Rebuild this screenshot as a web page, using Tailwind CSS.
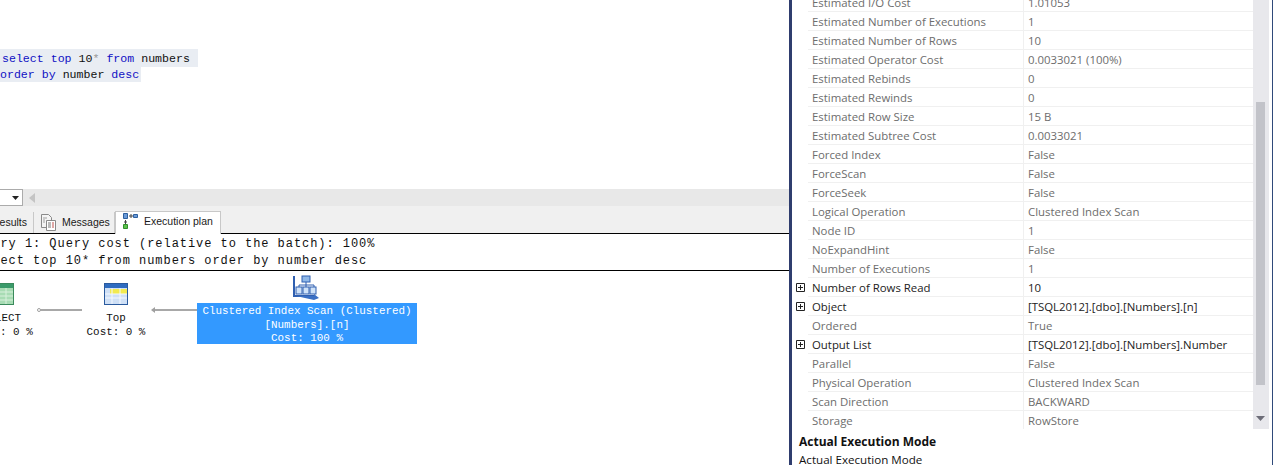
<!DOCTYPE html>
<html lang="en">
<head>
    <meta charset="UTF-8">
    <title>Execution plan</title>
    <script src="https://cdn.jsdelivr.net/npm/@tailwindcss/browser@4"></script>
</head>
<body class="bg-white overflow-hidden">
<div class="flex w-[1273px] h-[465px] overflow-hidden font-['Open_Sans',sans-serif] text-[11.4px]">

    <!-- Left: editor and results -->
    <div class="w-[789px] h-full flex flex-col shrink-0 overflow-hidden">
        <!-- Query editor -->
        <div class="h-[189px] pt-[49px] font-['Liberation_Mono',monospace] text-[11.6px] text-[#101010]">
            <div class="w-[198px] h-[18px] pl-[2px] leading-[19px] bg-[#e9edf3] whitespace-pre"><span class="text-[#1010c4]">select top</span> 10<span class="text-[#999]">*</span> <span class="text-[#1010c4]">from</span> numbers</div>
            <div class="w-[141px] h-[15px] leading-[15px] bg-[#e9edf3] whitespace-pre"><span class="text-[#1010c4]">order by</span> number <span class="text-[#1010c4]">desc</span></div>
        </div>

        <!-- Scroll bar strip -->
        <div class="h-[17px] bg-[#e8e8e8] flex items-center">
            <div class="w-[23px] h-[17px] bg-white border border-[#ababab] border-l-0 flex items-center justify-end pr-[3px]">
                <svg width="7" height="4" viewBox="0 0 7 4"><path d="M0 0h7L3.5 4z" fill="#222"/></svg>
            </div>
            <svg class="ml-[6px]" width="6" height="10" viewBox="0 0 6 10"><path d="M6 0v10L0 5z" fill="#c4c4c4"/></svg>
        </div>

        <!-- Tabs -->
        <div class="h-[28px] bg-[#f0f0f0] flex items-end border-b border-black font-['Liberation_Sans',sans-serif] text-[10.5px] text-[#1a1a1a] whitespace-nowrap">
            <div class="h-[21px] w-[34px] overflow-hidden border-r border-[#c8c8c8] flex items-center justify-end pr-[6px]">esults</div>
            <div class="h-[21px] w-[81px] border-r border-[#c8c8c8] flex items-center pl-[7px] gap-[6px]">
                <svg width="15" height="17" viewBox="0 0 15 17"><path d="M.5.500h7l3 3v10h-10z" fill="#f4f4f4" stroke="#8a8a8a"/><path d="M5.500 6.500h9v10h-9z" fill="#fff" stroke="#8a8a8a"/><path d="M7 9h3M7 11h3M7 13h3" stroke="#777"/><path d="M11 9h2M11 11h2M11 13h2" stroke="#c0504d"/><path d="M2 4h4M2 6h2M2 8h2" stroke="#a0a0a0"/></svg>
                <span>Messages</span>
            </div>
            <div class="h-[23px] w-[106px] bg-white border border-b-0 border-[#c8c8c8] flex items-center gap-[6px] pl-[7px] pb-[2px] -mb-px">
                <svg class="-mt-[3px]" width="15" height="16" viewBox="0 0 15 16"><path d="M.5.500h4v5h-4z" fill="#6a9ad8" stroke="#2c5f9e"/><path d="M10.500 1.500h4v3h-4z" fill="#6a9ad8" stroke="#2c5f9e"/><path d="M6 3h4M8 1v4M2.500 7v4M1 9h3" stroke="#444"/><path d="M.5 11.500h4v4h-4z" fill="#5cc04c" stroke="#2f8f2a"/></svg>
                <span>Execution plan</span>
            </div>
        </div>

        <!-- Query text -->
        <div class="h-[37px] border-b border-black overflow-hidden font-['Liberation_Mono',monospace] text-[12px] tracking-[0.95px] text-[#111] pt-[2px]">
            <div class="h-[17px] leading-[17px] -ml-[24px] whitespace-pre">Query 1: Query cost (relative to the batch): 100%</div>
            <div class="h-[17px] leading-[17px] -ml-[24px] whitespace-pre">select top 10* from numbers order by number desc</div>
        </div>

        <!-- Plan canvas -->
        <div class="relative flex-1 overflow-hidden font-['Liberation_Mono',monospace] text-[10.9px] leading-[14px] text-[#111]">
            <!-- SELECT node -->
            <svg class="absolute left-[-10px] top-[12px]" width="24" height="22" viewBox="0 0 24 22"><rect x=".5" y=".5" width="23" height="21" fill="#a8dcb4" stroke="#3a8a5c"/><rect x="1" y="1" width="22" height="4" fill="#3a9a6a"/><path d="M1 9h22M1 13h22M1 17h22M8 5v16M16 5v16" stroke="#d8f0dc"/></svg>
            <div class="absolute left-[-5px] top-[40px] whitespace-pre">LECT</div>
            <div class="absolute left-[0px] top-[54px] whitespace-pre">: 0 %</div>
            <!-- Connector -->
            <div class="absolute left-[38px] top-[38px] w-[44px] h-[2px] bg-[#a8a8a8]"></div>
            <div class="absolute left-[37px] top-[37px] w-[4px] h-[4px] rounded-full border border-[#a0a0a0] bg-white"></div>

            <!-- Top node -->
            <svg class="absolute left-[104px] top-[12px]" width="24" height="22" viewBox="0 0 24 22"><rect x=".5" y=".5" width="23" height="21" fill="#cfe0f6" stroke="#2a5a9e"/><rect x="1" y="1" width="22" height="4" fill="#2f6cc0"/><rect x="6" y="6" width="17" height="5" fill="#f2ea50"/><path d="M1 11h22M1 15h22M8 5v16M16 5v16" stroke="#f4f8ff"/></svg>
            <div class="absolute left-[86px] top-[40px] w-[60px] text-center">Top</div>
            <div class="absolute left-[86px] top-[54px] w-[60px] text-center whitespace-pre">Cost: 0 %</div>
            <!-- Connector -->
            <div class="absolute left-[153px] top-[38px] w-[44px] h-[2px] bg-[#a8a8a8]"></div>
            <svg class="absolute left-[151px] top-[36px]" width="4" height="6" viewBox="0 0 4 6"><path d="M4 0v6L0 3z" fill="#a0a0a0"/></svg>

            <!-- Clustered index scan icon -->
            <svg class="absolute left-[293px] top-[4px]" width="27" height="25" viewBox="0 0 27 25"><path d="M1 1v20h20" fill="none" stroke="#2f5fb0" stroke-width="2"/><path d="M3 21h18v-2l5 4-5 2z" fill="#3a6fc4"/><rect x="9" y="1" width="8" height="6" fill="#8fb8e8" stroke="#2f5fb0"/><path d="M13 7v3M6 10h15M6 10v2M13 10v2M21 10v2" stroke="#2f5fb0"/><rect x="3" y="12" width="6" height="7" fill="#cfe2f8" stroke="#2f5fb0"/><rect x="10" y="12" width="6" height="7" fill="#cfe2f8" stroke="#2f5fb0"/><rect x="17" y="12" width="6" height="7" fill="#cfe2f8" stroke="#2f5fb0"/></svg>
            <div class="absolute left-[197px] top-[32px] w-[220px] h-[41px] bg-[#3399ff] text-white text-center pt-[1px]">
                <div class="h-[14px]">Clustered Index Scan (Clustered)</div>
                <div class="h-[13px]">[Numbers].[n]</div>
                <div class="h-[13px]">Cost: 100 %</div>
            </div>
        </div>
    </div>

    <!-- Right: properties window -->
    <div class="flex-1 h-full border-l-[3px] border-r border-l-[#2f3d6e] border-r-[#2f4a7a] flex flex-col">
        <div class="h-[429px] flex overflow-hidden shrink-0">
            <div class="w-[461px] -mt-[7px] text-[#6d6d6d]">
                <div class="flex flex-col">
                    <div class="flex h-[19px] leading-[19px]"><span class="w-[16px] bg-white"></span><span class="w-[216px] pl-[4px] border-b border-r border-[#f0f0f0]">Estimated I/O Cost</span><span class="w-[229px] pl-[4px] border-b border-[#f0f0f0]">1.01053</span></div>
                    <div class="flex h-[19px] leading-[19px]"><span class="w-[16px] bg-white"></span><span class="w-[216px] pl-[4px] border-b border-r border-[#f0f0f0]">Estimated Number of Executions</span><span class="w-[229px] pl-[4px] border-b border-[#f0f0f0]">1</span></div>
                    <div class="flex h-[19px] leading-[19px]"><span class="w-[16px] bg-white"></span><span class="w-[216px] pl-[4px] border-b border-r border-[#f0f0f0]">Estimated Number of Rows</span><span class="w-[229px] pl-[4px] border-b border-[#f0f0f0]">10</span></div>
                    <div class="flex h-[19px] leading-[19px]"><span class="w-[16px] bg-white"></span><span class="w-[216px] pl-[4px] border-b border-r border-[#f0f0f0]">Estimated Operator Cost</span><span class="w-[229px] pl-[4px] border-b border-[#f0f0f0]">0.0033021 (100%)</span></div>
                    <div class="flex h-[19px] leading-[19px]"><span class="w-[16px] bg-white"></span><span class="w-[216px] pl-[4px] border-b border-r border-[#f0f0f0]">Estimated Rebinds</span><span class="w-[229px] pl-[4px] border-b border-[#f0f0f0]">0</span></div>
                    <div class="flex h-[19px] leading-[19px]"><span class="w-[16px] bg-white"></span><span class="w-[216px] pl-[4px] border-b border-r border-[#f0f0f0]">Estimated Rewinds</span><span class="w-[229px] pl-[4px] border-b border-[#f0f0f0]">0</span></div>
                    <div class="flex h-[19px] leading-[19px]"><span class="w-[16px] bg-white"></span><span class="w-[216px] pl-[4px] border-b border-r border-[#f0f0f0]">Estimated Row Size</span><span class="w-[229px] pl-[4px] border-b border-[#f0f0f0]">15 B</span></div>
                    <div class="flex h-[19px] leading-[19px]"><span class="w-[16px] bg-white"></span><span class="w-[216px] pl-[4px] border-b border-r border-[#f0f0f0]">Estimated Subtree Cost</span><span class="w-[229px] pl-[4px] border-b border-[#f0f0f0]">0.0033021</span></div>
                    <div class="flex h-[19px] leading-[19px]"><span class="w-[16px] bg-white"></span><span class="w-[216px] pl-[4px] border-b border-r border-[#f0f0f0]">Forced Index</span><span class="w-[229px] pl-[4px] border-b border-[#f0f0f0]">False</span></div>
                    <div class="flex h-[19px] leading-[19px]"><span class="w-[16px] bg-white"></span><span class="w-[216px] pl-[4px] border-b border-r border-[#f0f0f0]">ForceScan</span><span class="w-[229px] pl-[4px] border-b border-[#f0f0f0]">False</span></div>
                    <div class="flex h-[19px] leading-[19px]"><span class="w-[16px] bg-white"></span><span class="w-[216px] pl-[4px] border-b border-r border-[#f0f0f0]">ForceSeek</span><span class="w-[229px] pl-[4px] border-b border-[#f0f0f0]">False</span></div>
                    <div class="flex h-[19px] leading-[19px]"><span class="w-[16px] bg-white"></span><span class="w-[216px] pl-[4px] border-b border-r border-[#f0f0f0]">Logical Operation</span><span class="w-[229px] pl-[4px] border-b border-[#f0f0f0]">Clustered Index Scan</span></div>
                    <div class="flex h-[19px] leading-[19px]"><span class="w-[16px] bg-white"></span><span class="w-[216px] pl-[4px] border-b border-r border-[#f0f0f0]">Node ID</span><span class="w-[229px] pl-[4px] border-b border-[#f0f0f0]">1</span></div>
                    <div class="flex h-[19px] leading-[19px]"><span class="w-[16px] bg-white"></span><span class="w-[216px] pl-[4px] border-b border-r border-[#f0f0f0]">NoExpandHint</span><span class="w-[229px] pl-[4px] border-b border-[#f0f0f0]">False</span></div>
                    <div class="flex h-[19px] leading-[19px]"><span class="w-[16px] bg-white"></span><span class="w-[216px] pl-[4px] border-b border-r border-[#f0f0f0]">Number of Executions</span><span class="w-[229px] pl-[4px] border-b border-[#f0f0f0]">1</span></div>
                    <div class="flex h-[19px] leading-[19px] text-[#222]"><span class="w-[16px] bg-white flex items-center justify-center"><svg width="9" height="9" viewBox="0 0 9 9"><path d="M.5.500h8v8h-8zM2 4.500h5M4.500 2v5" fill="none" stroke="#222"/></svg></span><span class="w-[216px] pl-[4px] border-b border-r border-[#f0f0f0]">Number of Rows Read</span><span class="w-[229px] pl-[4px] border-b border-[#f0f0f0]">10</span></div>
                    <div class="flex h-[19px] leading-[19px] text-[#222]"><span class="w-[16px] bg-white flex items-center justify-center"><svg width="9" height="9" viewBox="0 0 9 9"><path d="M.5.500h8v8h-8zM2 4.500h5M4.500 2v5" fill="none" stroke="#222"/></svg></span><span class="w-[216px] pl-[4px] border-b border-r border-[#f0f0f0]">Object</span><span class="w-[229px] pl-[4px] border-b border-[#f0f0f0]">[TSQL2012].[dbo].[Numbers].[n]</span></div>
                    <div class="flex h-[19px] leading-[19px]"><span class="w-[16px] bg-white"></span><span class="w-[216px] pl-[4px] border-b border-r border-[#f0f0f0]">Ordered</span><span class="w-[229px] pl-[4px] border-b border-[#f0f0f0]">True</span></div>
                    <div class="flex h-[19px] leading-[19px] text-[#222]"><span class="w-[16px] bg-white flex items-center justify-center"><svg width="9" height="9" viewBox="0 0 9 9"><path d="M.5.500h8v8h-8zM2 4.500h5M4.500 2v5" fill="none" stroke="#222"/></svg></span><span class="w-[216px] pl-[4px] border-b border-r border-[#f0f0f0]">Output List</span><span class="w-[229px] pl-[4px] border-b border-[#f0f0f0]">[TSQL2012].[dbo].[Numbers].Number</span></div>
                    <div class="flex h-[19px] leading-[19px]"><span class="w-[16px] bg-white"></span><span class="w-[216px] pl-[4px] border-b border-r border-[#f0f0f0]">Parallel</span><span class="w-[229px] pl-[4px] border-b border-[#f0f0f0]">False</span></div>
                    <div class="flex h-[19px] leading-[19px]"><span class="w-[16px] bg-white"></span><span class="w-[216px] pl-[4px] border-b border-r border-[#f0f0f0]">Physical Operation</span><span class="w-[229px] pl-[4px] border-b border-[#f0f0f0]">Clustered Index Scan</span></div>
                    <div class="flex h-[19px] leading-[19px]"><span class="w-[16px] bg-white"></span><span class="w-[216px] pl-[4px] border-b border-r border-[#f0f0f0]">Scan Direction</span><span class="w-[229px] pl-[4px] border-b border-[#f0f0f0]">BACKWARD</span></div>
                    <div class="flex h-[19px] leading-[19px]"><span class="w-[16px] bg-white"></span><span class="w-[216px] pl-[4px] border-b border-r border-[#f0f0f0]">Storage</span><span class="w-[229px] pl-[4px] border-b border-[#f0f0f0]">RowStore</span></div>
                </div>
            </div>
            <!-- Scrollbar -->
            <div class="w-[16px] h-[429px] bg-[#e8e8ec] relative">
                <div class="absolute top-[102px] left-[3px] w-[9px] h-[283px] bg-[#c2c3c9]"></div>
                <svg class="absolute top-[416px] left-[3px]" width="9" height="5" viewBox="0 0 9 5"><path d="M0 0h9L4.500 5z" fill="#6d6d78"/></svg>
            </div>
            <div class="flex-1"></div>
        </div>
        <!-- Description -->
        <div class="pl-[7px] pt-[4px] text-[#111]">
            <div class="h-[18px] leading-[18px] font-bold text-[12px]">Actual Execution Mode</div>
            <div class="h-[18px] leading-[18px] text-[11.6px]">Actual Execution Mode</div>
        </div>
    </div>
</div>
</body>
</html>
